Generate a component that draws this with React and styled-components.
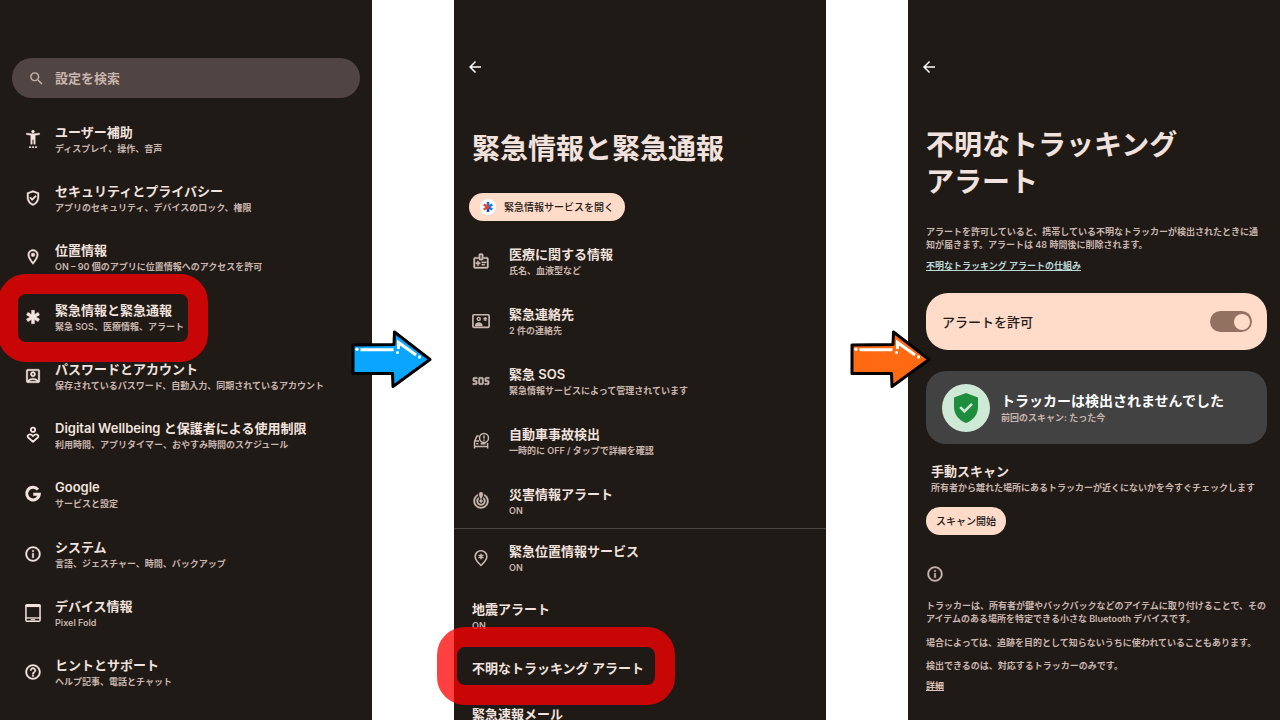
import React from 'react';
import styled, { createGlobalStyle, css } from 'styled-components';
import {
  MdSearch,
  MdSettingsAccessibility,
  MdOutlineGppGood,
  MdOutlineLocationOn,
  MdEmergency,
  MdOutlineAccountBox,
  MdInfoOutline,
  MdHelpOutline,
  MdArrowBack,
  MdOutlineMedicalInformation,
  MdSos,
  MdCrisisAlert,
} from 'react-icons/md';

const c = {
  bg: '#201a17',
  text: '#f1e2dd',
  muted: '#c8b5ad',
  icon: '#f3e4df',
  iconMuted: '#c9b8b1',
  field: '#504542',
  peach: '#ffdbca',
  ink: '#241a16',
};

const GlobalStyle = createGlobalStyle`
  *, *::before, *::after { box-sizing: border-box; }
  body {
    margin: 0;
    background: #fff;
    font-family: Inter, "Noto Sans CJK JP", sans-serif;
    font-weight: 600;
  }
  h1, h2, p, ul { margin: 0; padding: 0; }
  button, input { font: inherit; }
  svg path[fill='none'] { stroke: none; }
`;

const Page = styled.main`
  display: grid;
  grid-template-columns: repeat(3, minmax(0, 1fr));
  grid-template-rows: minmax(0, 1fr);
  column-gap: 82px;
  height: 100vh;
  overflow: hidden;
`;

const Panel = styled.section`
  position: relative;
  display: flex;
  flex-direction: column;
  background: ${c.bg};
  color: ${c.text};
`;

const SearchPanel = styled(Panel)`
  padding: 58px 0 31px;
`;

const DetailPanel = styled(Panel)`
  padding-top: 55px;
`;

const SearchBar = styled.label`
  display: flex;
  flex: none;
  align-items: center;
  gap: 10px;
  height: 40px;
  margin: 0 12px 24px;
  padding: 0 16px;
  border-radius: 20px;
  background: ${c.field};
  color: ${c.muted};

  svg { width: 17px; height: 17px; flex: none; }
`;

const SearchInput = styled.input`
  flex: 1;
  min-width: 0;
  padding: 0;
  border: 0;
  outline: 0;
  background: none;
  color: ${c.text};
  font-size: 13px;
  line-height: 20px;

  &::placeholder { color: ${c.muted}; opacity: 1; }
`;

const MenuList = styled.ul`
  display: flex;
  flex-direction: column;
  gap: ${(p) => p.$gap || 0}px;
  list-style: none;

  ${(p) => p.$fill && css`
    flex: 1;
    justify-content: space-between;
  `}
`;

const Row = styled.li`
  position: relative;
  display: flex;
  align-items: center;
  gap: ${(p) => (p.$muted ? 19 : 13)}px;
  min-height: 22px;
  padding-left: ${(p) => (p.$muted ? 18 : 24)}px;
`;

const RowIcon = styled.span`
  display: flex;
  flex: none;
  justify-content: center;
  width: 18px;
  color: ${(p) => (p.$muted ? c.iconMuted : c.icon)};

  svg { width: 18px; height: 18px; flex: none; }
  svg[stroke-width='0'] { stroke-width: 0.5px; }
`;

const RowTitle = styled.div`
  font-size: 13px;
  line-height: 20px;
  white-space: nowrap;
`;

const RowNote = styled.div`
  color: ${c.muted};
  font-size: 9px;
  line-height: 14px;
  white-space: nowrap;
`;

const Ring = styled.span`
  position: absolute;
  z-index: 2;
  top: ${(p) => p.$top}px;
  left: ${(p) => p.$left}px;
  width: ${(p) => p.$width}px;
  height: ${(p) => p.$height}px;
  border: 20px solid rgba(255, 0, 0, 0.75);
  border-radius: 28px;
  pointer-events: none;
`;

const BackButton = styled.button`
  display: grid;
  place-items: center;
  flex: none;
  width: 24px;
  height: 24px;
  margin-left: 9px;
  padding: 0;
  border: 0;
  background: none;
  color: #fff;

  svg { width: 18px; height: 18px; }
`;

const Heading = styled.h1`
  margin: ${(p) => p.$top}px 0 0 18px;
  font-size: 28px;
  font-weight: 600;
  line-height: 37px;
`;

const PillButton = styled.button`
  display: inline-flex;
  align-items: center;
  align-self: flex-start;
  flex: none;
  gap: 8px;
  height: 28px;
  padding: 0 10px;
  border: 0;
  border-radius: 14px;
  background: ${c.peach};
  color: ${c.ink};
  font-size: 10px;
  font-weight: 500;
  line-height: 16px;
  white-space: nowrap;

  svg { width: 16px; height: 16px; }
`;

const ServiceButton = styled(PillButton)`
  margin: 25px 0 23px 15px;
  padding: 0 11px;
`;

const Divider = styled.hr`
  flex: none;
  width: 100%;
  height: 1px;
  margin: 10px 0 12px;
  border: 0;
  background: #4b4441;
`;

const Body = styled.div`
  display: flex;
  flex-direction: column;
  padding: 0 13px 0 18px;
`;

const Paragraph = styled.p`
  margin-top: ${(p) => p.$top}px;
  color: ${c.muted};
  font-size: 9px;
  line-height: 13px;
  white-space: nowrap;
`;

const TextLink = styled.a`
  align-self: flex-start;
  margin-top: ${(p) => (p.$warm ? 7 : 8)}px;
  color: ${(p) => (p.$warm ? '#dfc3b6' : '#bcd6d6')};
  font-size: 9px;
  line-height: 13px;
  text-decoration: underline;
`;

const SwitchCard = styled.label`
  display: flex;
  align-items: center;
  justify-content: space-between;
  min-height: 57px;
  margin-top: 21px;
  padding: 0 15px 0 16px;
  border-radius: 22px;
  background: ${c.peach};
  color: ${c.ink};
  font-size: 13px;
  font-weight: 500;
  line-height: 20px;
`;

const Switch = styled.input`
  appearance: none;
  display: flex;
  align-items: center;
  justify-content: flex-end;
  width: 42px;
  height: 21px;
  margin: 0;
  padding: 0 2px;
  border-radius: 11px;
  background: #937160;

  &::before {
    content: '';
    width: 16px;
    height: 16px;
    border-radius: 50%;
    background: ${c.peach};
  }
  &:not(:checked) { justify-content: flex-start; }
`;

const StatusCard = styled.div`
  display: flex;
  align-items: center;
  gap: 11px;
  min-height: 73px;
  margin-top: 21px;
  padding: 0 16px;
  border-radius: 20px;
  background: #434242;

  svg { width: 48px; height: 48px; flex: none; }
`;

const StatusTitle = styled.div`
  color: #fff;
  font-size: 14px;
  line-height: 20px;
  white-space: nowrap;
`;

const ScanInfo = styled.div`
  margin: 17px 0 12px;
  padding-left: 5px;
`;

const InfoMark = styled.span`
  display: flex;
  margin-top: 30px;
  color: ${c.muted};

  svg { width: 18px; height: 18px; stroke-width: 0.5px; }
`;

const ArrowSvg = styled.svg`
  position: absolute;
  z-index: 3;
  top: 329px;
  left: ${(p) => p.$left};
  width: 82px;
  height: 60px;
`;

function Arrow({ color, left }) {
  return (
    <ArrowSvg $left={left} viewBox="0 0 82 60" aria-hidden="true">
      <path
        d="M2 16 L43 15.5 L43.5 3 L79 30.5 L42 57.5 L41.5 44.5 L2 44.5 Z"
        fill={color}
        stroke="#000"
        strokeWidth="3"
        strokeLinejoin="round"
      />
      <g fill="none" stroke="#fff" strokeWidth="3" strokeLinecap="butt">
        <path d="M9.5 20.8 H42.5" />
        <path d="M47.5 20 V13.5 L65 26" strokeWidth="3" />
      </g>
      <g fill="#fff">
        <circle cx="6" cy="20.3" r="1.7" />
        <circle cx="46.5" cy="23.4" r="1.5" />
        <circle cx="68.5" cy="28" r="1.7" />
      </g>
    </ArrowSvg>
  );
}

const WellbeingIcon = () => (
  <svg viewBox="0 0 24 24" fill="none" stroke="currentColor" strokeWidth="2.4">
    <circle cx="12" cy="5" r="2.9" />
    <path d="M12 21 L5.6 15.4 C3 12.6 7.6 8.8 12 13.6 C16.4 8.8 21 12.6 18.4 15.4 Z" strokeLinejoin="round" />
  </svg>
);

const GoogleIcon = () => (
  <svg viewBox="0 0 24 24" fill="none" stroke="currentColor" strokeWidth="4">
    <path d="M18.6 6.2 A8.4 8.4 0 1 0 20.4 12.2 H12.4" />
  </svg>
);

const TabletIcon = () => (
  <svg viewBox="0 0 24 24" fill="none" stroke="currentColor">
    <rect x="2.6" y="1" width="18.8" height="22" rx="1.4" strokeWidth="2" />
    <path d="M2 2.6 H22" strokeWidth="3" />
    <path d="M2 18.6 H22" strokeWidth="1.8" />
    <path d="M9 21 H15" strokeWidth="1.6" />
  </svg>
);

const ContactIcon = () => (
  <svg viewBox="0 0 24 24" fill="none" stroke="currentColor">
    <rect x="1.2" y="3.6" width="21.6" height="16.8" rx="1.4" strokeWidth="2.2" />
    <circle cx="9" cy="9.2" r="2" strokeWidth="1.8" />
    <path d="M4 19 V17.6 C4 14.6 7 13.6 9 13.6 S14 14.6 14 17.6 V19 Z" fill="currentColor" stroke="none" />
    <path d="M17.6 6.6 V12 M15.3 8 L19.9 10.6 M19.9 8 L15.3 10.6" strokeWidth="1.6" />
  </svg>
);

const CarCrashIcon = () => (
  <svg viewBox="0 0 24 24" fill="none" stroke="currentColor" strokeWidth="2">
    <circle cx="16" cy="8" r="6" />
    <path d="M16 4.6 V8.8 M16 10 V11.8" />
    <path d="M9 5.2 H6.6 L3.4 12.6 V22 M3 12 H9.5 M3 19.4 H21 M20.8 14.6 V22" />
    <path d="M5.8 15.8 H8.4 M11.5 15.8 H18" />
  </svg>
);

const EmergencyPinIcon = () => (
  <svg viewBox="0 0 24 24" fill="none" stroke="currentColor">
    <path
      d="M12 22 C7 17.4 4.2 13.6 4.2 10.1 C4.2 5.4 7.8 2.3 12 2.3 S19.8 5.4 19.8 10.1 C19.8 13.6 17 17.4 12 22 Z"
      strokeWidth="2.1"
    />
    <path d="M12 6.2 V13.8 M8.7 8.1 L15.3 11.9 M15.3 8.1 L8.7 11.9" strokeWidth="2" />
  </svg>
);

const ServiceIcon = () => (
  <svg viewBox="0 0 16 16">
    <circle cx="8" cy="8" r="8" fill="#fff" />
    <g strokeWidth="2.6">
      <path d="M8 8 V3 M8 8 L12.3 5.5 M8 8 L12.3 10.5" stroke="#1a73e8" />
      <path d="M8 8 L8 13" stroke="#174ea6" />
      <path d="M8 8 L3.7 5.5 M8 8 L3.7 10.5" stroke="#ea4335" />
    </g>
    <circle cx="7.4" cy="8" r="1.8" fill="#ea4335" />
  </svg>
);

const ShieldBadge = () => (
  <svg viewBox="0 0 48 48" aria-hidden="true">
    <circle cx="24" cy="24" r="24" fill="#ceead6" />
    <path
      d="M24 9 L36 13.5 V23 C36 30.5 31 36.6 24 39 C17 36.6 12 30.5 12 23 V13.5 Z"
      fill="#1e8e3e"
    />
    <polyline points="18.2,23.2 22.4,27.4 30,19.8" fill="none" stroke="#ceead6" strokeWidth="2.6" />
  </svg>
);

const settings = [
  [MdSettingsAccessibility, 'ユーザー補助', 'ディスプレイ、操作、音声'],
  [MdOutlineGppGood, 'セキュリティとプライバシー', 'アプリのセキュリティ、デバイスのロック、権限'],
  [MdOutlineLocationOn, '位置情報', 'ON – 90 個のアプリに位置情報へのアクセスを許可'],
  [MdEmergency, '緊急情報と緊急通報', '緊急 SOS、医療情報、アラート', { $top: -26, $left: -2, $width: 210, $height: 88 }],
  [MdOutlineAccountBox, 'パスワードとアカウント', '保存されているパスワード、自動入力、同期されているアカウント'],
  [WellbeingIcon, 'Digital Wellbeing と保護者による使用制限', '利用時間、アプリタイマー、おやすみ時間のスケジュール'],
  [GoogleIcon, 'Google', 'サービスと設定'],
  [MdInfoOutline, 'システム', '言語、ジェスチャー、時間、バックアップ'],
  [TabletIcon, 'デバイス情報', 'Pixel Fold'],
  [MdHelpOutline, 'ヒントとサポート', 'ヘルプ記事、電話とチャット'],
];

const emergency = [
  [MdOutlineMedicalInformation, '医療に関する情報', '氏名、血液型など'],
  [ContactIcon, '緊急連絡先', '2 件の連絡先'],
  [MdSos, '緊急 SOS', '緊急情報サービスによって管理されています'],
  [CarCrashIcon, '自動車事故検出', '一時的に OFF / タップで詳細を確認'],
  [MdCrisisAlert, '災害情報アラート', 'ON'],
];

const alerts = [
  [EmergencyPinIcon, '緊急位置情報サービス', 'ON'],
  [null, '地震アラート', 'ON'],
  [null, '不明なトラッキング アラート', null, { $top: -30, $left: -17, $width: 238, $height: 78 }],
  [null, '緊急速報メール', null],
];

function MenuRow({ item: [Icon, title, note, ring], muted }) {
  return (
    <Row $muted={muted}>
      {Icon && (
        <RowIcon $muted={muted}>
          <Icon />
        </RowIcon>
      )}
      <div>
        <RowTitle>{title}</RowTitle>
        {note && <RowNote>{note}</RowNote>}
      </div>
      {ring && <Ring {...ring} />}
    </Row>
  );
}

export default function App() {
  return (
    <>
      <GlobalStyle />
      <Page>
        <SearchPanel>
          <SearchBar>
            <MdSearch />
            <SearchInput type="text" placeholder="設定を検索" aria-label="設定を検索" />
          </SearchBar>
          <MenuList $fill>
            {settings.map((item) => (
              <MenuRow key={item[1]} item={item} />
            ))}
          </MenuList>
          <Arrow color="#0aa5ff" left="calc(100% - 21px)" />
        </SearchPanel>

        <DetailPanel>
          <BackButton aria-label="戻る">
            <MdArrowBack />
          </BackButton>
          <Heading $top={52}>緊急情報と緊急通報</Heading>
          <ServiceButton>
            <ServiceIcon />
            緊急情報サービスを開く
          </ServiceButton>
          <MenuList $gap={26}>
            {emergency.map((item) => (
              <MenuRow key={item[1]} item={item} muted />
            ))}
          </MenuList>
          <Divider />
          <MenuList $gap={24}>
            {alerts.map((item) => (
              <MenuRow key={item[1]} item={item} muted />
            ))}
          </MenuList>
          <Arrow color="#ff6a13" left="calc(100% + 24px)" />
        </DetailPanel>

        <DetailPanel>
          <BackButton aria-label="戻る">
            <MdArrowBack />
          </BackButton>
          <Heading $top={48}>
            不明なトラッキング
            <br />
            アラート
          </Heading>
          <Body>
            <Paragraph $top={24}>
              アラートを許可していると、携帯している不明なトラッカーが検出されたときに通
              <br />
              知が届きます。アラートは 48 時間後に削除されます。
            </Paragraph>
            <TextLink href="#about">不明なトラッキング アラートの仕組み</TextLink>
            <SwitchCard>
              アラートを許可
              <Switch type="checkbox" defaultChecked />
            </SwitchCard>
            <StatusCard>
              <ShieldBadge />
              <div>
                <StatusTitle>トラッカーは検出されませんでした</StatusTitle>
                <RowNote>前回のスキャン: たった今</RowNote>
              </div>
            </StatusCard>
            <ScanInfo>
              <RowTitle>手動スキャン</RowTitle>
              <RowNote>所有者から離れた場所にあるトラッカーが近くにないかを今すぐチェックします</RowNote>
            </ScanInfo>
            <PillButton>スキャン開始</PillButton>
            <InfoMark>
              <MdInfoOutline />
            </InfoMark>
            <Paragraph $top={16}>
              トラッカーは、所有者が鍵やバックパックなどのアイテムに取り付けることで、その
              <br />
              アイテムのある場所を特定できる小さな Bluetooth デバイスです。
            </Paragraph>
            <Paragraph $top={11}>
              場合によっては、追跡を目的として知らないうちに使われていることもあります。
            </Paragraph>
            <Paragraph $top={10}>検出できるのは、対応するトラッカーのみです。</Paragraph>
            <TextLink $warm href="#details">
              詳細
            </TextLink>
          </Body>
        </DetailPanel>
      </Page>
    </>
  );
}
